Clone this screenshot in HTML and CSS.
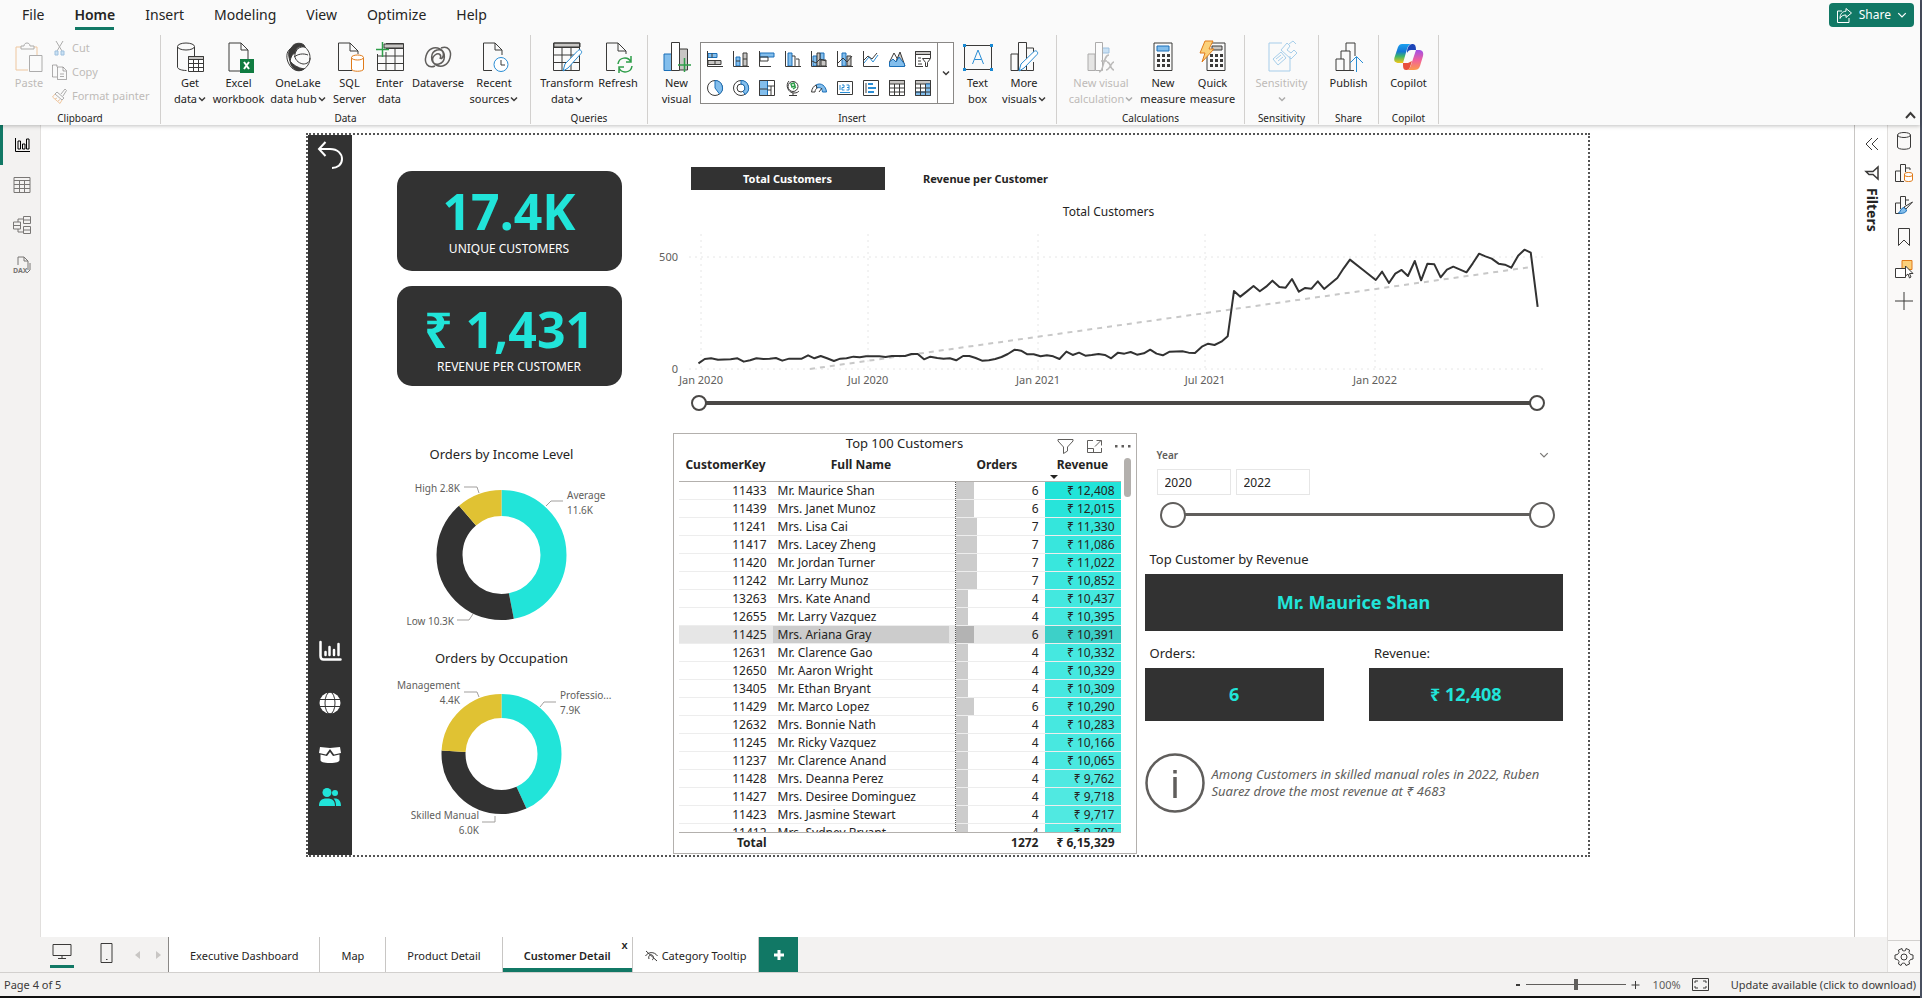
FILE: index.html
```html
<!DOCTYPE html>
<html lang="en">

<head>
    <meta charset="UTF-8">
    <meta name="viewport" content="width=device-width, initial-scale=1.0">
    <title>Customer Detail - Report</title>
    <link rel="stylesheet" href="styles.css">
</head>

<body>
    <svg class="defs" width="0" height="0">
        <defs>
            <symbol id="doc" viewBox="0 0 28 30"><path d="M4 1h12l7 7v21H4zM16 1v7h7" /></symbol>
            <symbol id="chev" viewBox="0 0 8 8"><path d="M1 2.500l3 3 3-3" /></symbol>
            <linearGradient id="cpBlue" x1="0" y1="0" x2="0" y2="1"><stop offset="0" stop-color="#1aa0f0" /><stop offset=".4" stop-color="#1477d4" /><stop offset=".65" stop-color="#3fb568" /><stop offset="1" stop-color="#f5c816" /></linearGradient>
            <linearGradient id="cpPink" x1="0" y1="0" x2="0" y2="1"><stop offset="0" stop-color="#a04fe8" /><stop offset=".5" stop-color="#f0609c" /><stop offset="1" stop-color="#fc9a4a" /></linearGradient>
        </defs>
    </svg>
    <div class="app">
        <header class="ribbon">
            <div class="ribbon-top">
                <nav class="ribbon-tabs">
                    <button>File</button>
                    <button class="active">Home</button>
                    <button>Insert</button>
                    <button>Modeling</button>
                    <button>View</button>
                    <button>Optimize</button>
                    <button>Help</button>
                </nav>
                <button class="share-button">
                    <svg width="17" height="17" viewBox="0 0 17 17"><path d="M6 4H1.500v11.500H13V11M10 1.500l5.500 4.500-5.500 4.500V8C7 8 5 9 4 11.500 4 7 6 4.500 10 4.200z" /></svg>
                    Share
                    <svg width="10" height="10" viewBox="0 0 8 8"><use href="#chev" /></svg>
                </button>
            </div>

            <div class="ribbon-groups">
                <section class="group group-clipboard disabled">
                    <div class="items">
                        <button class="tool">
                            <svg width="28" height="30" viewBox="0 0 28 30"><path class="orange" d="M6 5H1v23h12M19 5h3v8" /><path d="M6 7V4h3c0-4 6-4 6 0h4v3zM14.500 13.500H27V29.500H14.500z" /></svg>
                            <span>Paste</span>
                        </button>
                        <div class="clip-list">
                            <button><svg width="15" height="16" viewBox="0 0 15 16"><path d="M4 1l6 10M11 1L5 11" /><path class="blue" d="M3 11h3v4H3zM9 11h3v4H9z" /></svg>Cut</button>
                            <button><svg width="15" height="16" viewBox="0 0 15 16"><path d="M5 3V1H.500v12H5M5.500 3H11l3.500 3.500V15.500h-9zM11 3v4h3M8 10h4M8 12.500h4" /></svg>Copy</button>
                            <button><svg width="15" height="16" viewBox="0 0 15 16"><path d="M9 6l4-5 1.500 1.500L11 8M5 4l7 6-2 2-7-6z" /><path class="orange" d="M3 6L.500 9 8 15.500l2-3.500M3 11l2-1M6 13l2-1.500" /></svg>Format painter</button>
                        </div>
                    </div>
                    <h2>Clipboard</h2>
                </section>

                <section class="group group-data">
                    <div class="items">
                        <button class="tool">
                            <svg width="28" height="30" viewBox="0 0 28 30"><path d="M1.500 5v20c0 2 4 3.500 9 3.500M18.500 14V5" /><ellipse cx="10" cy="4.500" rx="8.500" ry="3.500" /><path class="white" d="M12.500 14.500h15v15h-15z" /><path class="fillgray" d="M12.500 14.500h15v3h-15z" /><path d="M12.500 21.500h15M12.500 25.500h15M17.500 17.500v12M22.500 17.500v12" /></svg>
                            <span>Get<br>data<svg class="chev"><use href="#chev" /></svg></span>
                        </button>
                        <button class="tool">
                            <svg width="28" height="30" viewBox="0 0 28 30"><use href="#doc" /><path class="excel" d="M15 17h14v14H15z" /><path class="whiteline" d="M19 20l5 7M24 20l-5 7" /></svg>
                            <span>Excel<br>workbook</span>
                        </button>
                        <button class="tool">
                            <svg width="28" height="30" viewBox="0 0 28 30"><path class="dark" d="M8 5C10 0 20 0 21 5c-5-2-9 1-10 6C8 12 7 15 6 19 4 13 4 8 8 5z" /><path d="M6 7C2 10 2 17 5 22c3 6 9 8 13 6 5-2 8-7 8-12 0-4-1-7-5-11-6-1-9 3-10 7-1 5 3 9 8 10 4 0 7-2 7-6" /><path class="dark" d="M6 19c3 4 8 7 14 8-6 4-13 0-14-8z" /><path d="M10 15c4-3 9-4 14-2" /></svg>
                            <span>OneLake<br>data hub<svg class="chev"><use href="#chev" /></svg></span>
                        </button>
                        <button class="tool">
                            <svg width="28" height="30" viewBox="0 0 28 30"><path d="M16 28.500H2.500V1H14l8 8v3M14 1v8h8" /><path class="orange fill-white" d="M15.500 15.500v11.500c0 3 12 3 12 0V15.500" /><ellipse class="orange fill-white" cx="21.500" cy="15.500" rx="6" ry="2.500" /></svg>
                            <span>SQL<br>Server</span>
                        </button>
                        <button class="tool">
                            <svg width="28" height="30" viewBox="0 0 28 30"><path class="fillgray" d="M8 2h19.500v4H8z" /><path d="M10 1.500h17.500v27H1.500V12M10 6.500h17.500M1.500 14h26M1.500 21.500h26M10 10v18.500M19 6.500v22" /><path class="green" d="M0 7.500h13M6.500 0v15" /></svg>
                            <span>Enter<br>data</span>
                        </button>
                        <button class="tool">
                            <svg width="28" height="30" viewBox="0 0 28 30"><path class="ring" d="M11 24C4 27 0 21 2 14S10 4 16 7s6 13-1 15-8-6-4-9 7 0 5 4M17 6c7-3 11 3 9 10S18 26 12 23 6 10 13 8s8 6 4 9" /></svg>
                            <span>Dataverse</span>
                        </button>
                        <button class="tool">
                            <svg width="28" height="30" viewBox="0 0 28 30"><path d="M12 28.500H3.500V1H15l7 7v5M15 1v7h7" /><circle class="blueline fill-white" cx="21" cy="22.500" r="7" /><path d="M21 18v5h4" /></svg>
                            <span>Recent<br>sources<svg class="chev"><use href="#chev" /></svg></span>
                        </button>
                    </div>
                    <h2>Data</h2>
                </section>

                <section class="group group-queries">
                    <div class="items">
                        <button class="tool">
                            <svg width="28" height="30" viewBox="0 0 28 30"><path class="fillgray" d="M1 1h26v4H1z" /><path d="M.500 1h26v27.500H.500zM.500 5.500h26M.500 13h26M.500 20.500h26M9 5.500v23M18 5.500v23" /><path class="blueline fill-white" d="M12 22L25 8.500c2-2 5 1 3 3L15 26l-5 3z" /></svg>
                            <span>Transform<br>data<svg class="chev"><use href="#chev" /></svg></span>
                        </button>
                        <button class="tool">
                            <svg width="28" height="30" viewBox="0 0 28 30"><path d="M11 28.500H2.500V1H14l8 8v3M14 1v8h8" /><path class="green" d="M14 22c1-7 10-8 13-2M27 14v6h-5M28 24c-1 7-10 8-13 2M15 31v-6h5" /></svg>
                            <span>Refresh</span>
                        </button>
                    </div>
                    <h2>Queries</h2>
                </section>

                <section class="group group-insert">
                    <div class="items">
                        <button class="tool">
                            <svg width="28" height="30" viewBox="0 0 28 30"><path class="fillgray" d="M16.500 7h8v21h-8z" /><path class="blue" d="M1 12h8v16.500H1z" /><path class="white" d="M8.500.500h8v28h-8z" /><path class="green" d="M15 23h13M21.500 16v14" /></svg>
                            <span>New<br>visual</span>
                        </button>
                        <div class="gallery">
                            <div class="gallery-grid">
                                <button aria-label="Stacked bar chart"><svg width="16" height="16" viewBox="0 0 16 16"><path class="blue" d="M1 2.500h9v4H1z" /><path class="fillgray" d="M1 9.500h13v4H1z" /><path d="M.500 0v15.500H16M5 2.500v4M8 9.500v4" /></svg></button>
                                <button aria-label="Stacked column chart"><svg width="16" height="16" viewBox="0 0 16 16"><path class="blue" d="M3 6h4v9H3z" /><path class="fillgray" d="M10 2h4v13h-4z" /><path d="M.500 0v15.500H16M3 10h4M10 8h4" /></svg></button>
                                <button aria-label="Clustered bar chart"><svg width="16" height="16" viewBox="0 0 16 16"><path class="blue" d="M1 2h14v4H1z" /><path d="M.500 0v15.500H12M1 6h8v4H1z" /></svg></button>
                                <button aria-label="Clustered column chart"><svg width="16" height="16" viewBox="0 0 16 16"><path class="blue" d="M3 2h4v13H3z" /><path d="M.500 0v15.500H16M7 5h3v10M11 8h3v7" /></svg></button>
                                <button aria-label="Stacked ribbon chart"><svg width="16" height="16" viewBox="0 0 16 16"><path class="blue" d="M2 5h4v10H2zM9 2h4v7H9z" /><path class="fillgray" d="M6 2h3v13H6zM10 9h5v6h-5z" /><path d="M.500 0v15.500H16M1 10l4 2 4-4 6 2" /></svg></button>
                                <button aria-label="Line and column chart"><svg width="16" height="16" viewBox="0 0 16 16"><path class="blue" d="M5 2h4v13H5z" /><path class="fillgray" d="M10 5h4v10h-4z" /><path d="M.500 0v15.500H16M1 12l5-5 4 4 5-6" /></svg></button>
                                <button aria-label="Line chart"><svg width="16" height="16" viewBox="0 0 16 16"><path class="blueline" d="M1 12l5-6 4 5 5-7" /><path d="M.500 0v15.500H16M1 9l4-4 4 3 5-6" /></svg></button>
                                <button aria-label="Area chart"><svg width="16" height="16" viewBox="0 0 16 16"><path class="fillgray" d="M5 15L11 1l5 14z" /><path d="M.500 11L5 2l4 7" /><path class="blue" d="M.500 15.500V11L4 8l3 3 3-5 5.500 7v2.500z" /></svg></button>
                                <button aria-label="Slicer"><svg width="16" height="16" viewBox="0 0 16 16"><path class="fillgray" d="M.500.500h15v3H.500z" /><path d="M8 15.500H.500V.500h15V7M3 7h3M3 10h3M3 13h4M7.500 7.500h8l-3 4v4h-2v-4z" /></svg></button>
                                <button aria-label="Pie chart"><svg width="16" height="16" viewBox="0 0 16 16"><circle cx="8" cy="8" r="7.500" /><path class="blue" d="M8 8V.500A7.500 7.500 0 0 1 12.500 14z" /></svg></button>
                                <button aria-label="Donut chart"><svg width="16" height="16" viewBox="0 0 16 16"><circle cx="8" cy="8" r="7.500" /><circle cx="8" cy="8" r="4" /><path class="blue" d="M8 .500A7.500 7.500 0 0 1 12 14.400l-2-3A4 4 0 0 0 8 4z" /></svg></button>
                                <button aria-label="Treemap"><svg width="16" height="16" viewBox="0 0 16 16"><path class="blue" d="M.500.500h8v15h-8z" /><path d="M.500.500h15v15H.500zM.500 9h8M8.500 6h7M12 6v9.500M8.500 10H12" /></svg></button>
                                <button aria-label="Map"><svg width="16" height="16" viewBox="0 0 16 16"><circle cx="8" cy="6.500" r="5" /><path d="M4 1C0 5 3 13 9 13c3 0 4-1 5-2M8 13v2.500M4 15.500h8" /><path class="green" d="M6 4l3-1 1 3-3 1zM8 9l3-2" /></svg></button>
                                <button aria-label="Gauge"><svg width="16" height="16" viewBox="0 0 16 16"><path class="blue" d="M5 5c5-3 10 1 10.500 7h-4C11 8 9 7 6 8z" /><path d="M.500 12C1 8 3 6 5 5l1 3c-1 1-2 2-2 4zM8 12l3-4" /></svg></button>
                                <button aria-label="Card"><svg width="16" height="16" viewBox="0 0 16 16"><path d="M.500 1.500h15v13H.500z" /><path class="blueline" d="M3 5v5M5 5h2v2.500H5V10h2.500M9.500 5H12v5H9.500M10 7.500h2M3 12.500h10" /></svg></button>
                                <button aria-label="Multi-row card"><svg width="16" height="16" viewBox="0 0 16 16"><path d="M.500.500h15v15H.500zM3 3v10" /><path class="blueline" d="M5 4h5M5 8h8M5 12h6" stroke-width="2" /></svg></button>
                                <button aria-label="Table"><svg width="16" height="16" viewBox="0 0 16 16"><path class="fillgray" d="M.500.500h15v3.500H.500z" /><path d="M.500.500h15v15H.500zM.500 8h15M.500 12h15M5.500 4v11.500M10.500 4v11.500" /></svg></button>
                                <button aria-label="Matrix"><svg width="16" height="16" viewBox="0 0 16 16"><path class="fillgray" d="M.500.500h15v3.500H.500z" /><path class="blue" d="M10.500 4h5v11.500h-5zM.500 12h10v3.500H.500z" /><path d="M.500.500h15v15H.500zM.500 8h15M.500 12h15M5.500 4v11.500M10.500 4v11.500" /></svg></button>
                            </div>
                            <button class="gallery-more" aria-label="More"><svg class="chev"><use href="#chev" /></svg></button>
                        </div>
                        <button class="tool">
                            <svg width="30" height="28" viewBox="0 0 30 28"><path d="M1.500 2.500h27v24h-27z" /><path class="dots" d="M0 1h3v3H0zM27 1h3v3h-3zM0 25h3v3H0zM27 25h3v3h-3z" /><path class="blueline" d="M9.500 21L15 7l5.500 14M11.500 16.500h7" /></svg>
                            <span>Text<br>box</span>
                        </button>
                        <button class="tool">
                            <svg width="28" height="30" viewBox="0 0 28 30"><path d="M1 12h7v16.500H1zM8.500.500h8v28h-8zM16.500 6h7v5M16.500 28.500h7V20" /><path class="blueline fill-white" d="M11 22L24 9.500c2-2 5 1 3 3L14 26l-5 3z" /></svg>
                            <span>More<br>visuals<svg class="chev"><use href="#chev" /></svg></span>
                        </button>
                    </div>
                    <h2>Insert</h2>
                </section>

                <section class="group group-calc">
                    <div class="items">
                        <button class="tool disabled">
                            <svg width="28" height="30" viewBox="0 0 28 30"><path class="fillgray" d="M1 12h7v16.500H1z" /><path class="blue" d="M15 6h7v5h-7z" /><path class="white" d="M8.500.500h7v28h-7z" /><path class="fx" d="M12 30c5 0 4-17 10-17M14 19h6M20 20c4 0 3 8 7 8M27 20c-3 0-4 8-8 8" /></svg>
                            <span>New visual<br>calculation<svg class="chev"><use href="#chev" /></svg></span>
                        </button>
                        <button class="tool">
                            <svg width="20" height="30" viewBox="0 0 20 30"><path d="M1 1h18v27.500H1z" /><path class="blue" d="M4 4h12v5H4z" /><path class="keys" d="M4 13.500h13M4 18.500h13M4 23.500h13" /></svg>
                            <span>New<br>measure</span>
                        </button>
                        <button class="tool">
                            <svg width="30" height="30" viewBox="0 0 30 30"><path d="M9 1h18v27.500H9z" /><path class="fillgray" d="M14 4h10v4H14z" /><path class="keys" d="M12 13.500h13M12 18.500h13M12 23.500h13" /><path class="bolt" d="M7-1h8l-4 8h5L4 20l3-9H2z" /></svg>
                            <span>Quick<br>measure</span>
                        </button>
                    </div>
                    <h2>Calculations</h2>
                </section>

                <section class="group group-sensitivity">
                    <div class="items">
                        <button class="tool disabled">
                            <svg width="28" height="30" viewBox="0 0 28 30"><path class="blueline" d="M14 1H1v28h21V14" /><path class="blueline" d="M5 17l8-7 5 6-8 7zM8 17l5-4M10 19l5-4M13 8l6-7 3 3-3 4 4 3 3-3 3 3-6 6zM21 2l4-3 3 3" /></svg>
                            <span>Sensitivity<br><svg class="chev"><use href="#chev" /></svg></span>
                        </button>
                    </div>
                    <h2>Sensitivity</h2>
                </section>

                <section class="group group-share">
                    <div class="items">
                        <button class="tool">
                            <svg width="28" height="30" viewBox="0 0 28 30"><path d="M1 17h8v11.500H1zM6 17V9h9v19.500H9M11 9V1h9v13M15 28.500h4" /><path class="blueline" d="M21.500 30V15M15 21l6.500-6.500L28 21" /></svg>
                            <span>Publish</span>
                        </button>
                    </div>
                    <h2>Share</h2>
                </section>

                <section class="group group-copilot">
                    <div class="items">
                        <button class="tool">
                            <svg width="30" height="28" viewBox="0 0 30 28"><g stroke="none"><path fill="url(#cpPink)" d="M22 7h3c3 0 5 2 4 6l-3 10c-1 3-3 4-6 4h-8c3 0 4-2 5-5z" /><path fill="#e8503c" d="M9 20h5l4-2-2 6c-1 3-3 3-4 3-3 0-3-3-3-7z" /><path fill="url(#cpBlue)" d="M8 1h10c-3 0-4 2-5 5L9 20H5c-4 0-6-2-4-7L4 4c1-2 2-3 4-3z" /><path fill="#1c45b8" d="M13 1h6c2 0 3 2 3 6h-5c-2 0-3 1-4 3 0-4 1-8 5-9z" /></g></svg>
                            <span>Copilot</span>
                        </button>
                    </div>
                    <h2>Copilot</h2>
                </section>
                <button class="collapse" aria-label="Collapse ribbon"><svg width="11" height="8" viewBox="0 0 11 8"><path d="M1 7l4.500-5L10 7" /></svg></button>
            </div>
        </header>

        <div class="workspace">
            <nav class="view-nav">
                <button class="active" aria-label="Report view"><svg width="16" height="16" viewBox="0 0 16 16"><path d="M1.500 1v13.500H16M4 4h2.500v8H4zM8.500 7H11v5H8.500zM12.500 2H15v10h-2.500z" /></svg></button>
                <button aria-label="Table view"><svg width="18" height="16" viewBox="0 0 18 16"><path d="M1 .500h16v15H1zM1 3.500h16M1 7.500h16M1 11.500h16M6.500 3.500v12M11.500 3.500v12" /></svg></button>
                <button aria-label="Model view"><svg width="18" height="18" viewBox="0 0 18 18"><path d="M.500 6h7v7h-7zM.500 9.500h7M10.500.500h7v7h-7zM10.500 4h7M10.500 10.500h7v7h-7zM10.500 14h7M5 6V3h5.500M5 13v3h5.500" /></svg></button>
                <button aria-label="DAX query view"><svg width="18" height="18" viewBox="0 0 18 18"><path d="M5 9V1h6l4 4v9M11 1v4h4M17 7v7l-3 3" /><text x="0" y="17">DAX</text></svg></button>
            </nav>

            <main class="canvas">
                <div class="report">
                    <nav class="report-nav">
                        <button aria-label="Back"><svg width="28" height="30" viewBox="0 0 28 30"><path d="M9.500 2L3 9l6.500 7M3 9h11c8 0 12 5 12 10 0 6-5 9-10 9" stroke-width="2" /></svg></button>
                        <div class="report-links">
                            <a href="#" aria-label="Dashboard"><svg width="22" height="20" viewBox="0 0 22 20"><path d="M1.500 1v14c0 2 1 3.500 3 3.500h17M6.500 14v-3M10.500 14V6M15 14V9M19.500 14V3" stroke-width="2.500" stroke-linecap="round" /></svg></a>
                            <a href="#" aria-label="Map"><svg width="22" height="22" viewBox="0 0 22 22"><circle class="solid" cx="11" cy="11" r="10.500" /><path class="cut" d="M0 7.500h22M0 14.500h22" /><ellipse class="cut" cx="11" cy="11" rx="5" ry="11" /></svg></a>
                            <a href="#" aria-label="Products"><svg width="22" height="18" viewBox="0 0 22 18"><path class="solid" d="M1 1l10 1 10-1 1 6-7 1.500L11 3 7 8.500 0 7zM1.500 8.500L8 10l3-4 3 4 6.500-1.500V14c0 2-3 3-9.500 3s-9.500-1-9.500-3z" /></svg></a>
                            <a href="#" class="current" aria-label="Customers"><svg width="22" height="18" viewBox="0 0 22 18"><circle class="solid" cx="8" cy="4.500" r="4.500" /><circle class="solid" cx="16" cy="5" r="3" /><path class="solid" d="M0 18c0-5 2-7.500 8-7.500s8 2.500 8 7.500zM17 18c0-4-1-6-2.500-7.500 5-.500 7.500 2 7.500 7.500z" /></svg></a>
                        </div>
                    </nav>

                    <div class="col-left">
                        <div class="kpi">
                            <strong>17.4K</strong>
                            <span>UNIQUE CUSTOMERS</span>
                        </div>
                        <div class="kpi kpi-low">
                            <strong>₹ 1,431</strong>
                            <span>REVENUE PER CUSTOMER</span>
                        </div>

                        <h3>Orders by Income Level</h3>
                        <svg class="donut" viewBox="0 0 300 184">
                            <g transform="rotate(-90 149.500 91)" stroke-width="26">
                                <circle class="teal" cx="149.500" cy="91" r="52" pathLength="247" stroke-dasharray="116 131" />
                                <circle class="black" cx="149.500" cy="91" r="52" pathLength="247" stroke-dasharray="103 144" stroke-dashoffset="-116" />
                                <circle class="yellow" cx="149.500" cy="91" r="52" pathLength="247" stroke-dasharray="28 219" stroke-dashoffset="-219" />
                            </g>
                            <path class="leader" d="M112 23h13l2 6M194 42l5-5h12M105 156h12l4-6" />
                            <text x="108" y="28" class="end">High 2.8K</text>
                            <text x="215" y="35">Average</text>
                            <text x="215" y="50">11.6K</text>
                            <text x="102" y="161" class="end">Low 10.3K</text>
                        </svg>

                        <h3>Orders by Occupation</h3>
                        <svg class="donut" viewBox="0 0 300 186">
                            <g transform="rotate(-90 149.500 86)" stroke-width="24">
                                <circle class="teal" cx="149.500" cy="86" r="48" pathLength="183" stroke-dasharray="79 104" />
                                <circle class="black" cx="149.500" cy="86" r="48" pathLength="183" stroke-dasharray="60 123" stroke-dashoffset="-79" />
                                <circle class="yellow" cx="149.500" cy="86" r="48" pathLength="183" stroke-dasharray="44 139" stroke-dashoffset="-139" />
                            </g>
                            <path class="leader" d="M112 24h13l2 5M188 39l4-5h12M130 154h13v-6" />
                            <text x="108" y="21" class="end">Management</text>
                            <text x="108" y="36" class="end">4.4K</text>
                            <text x="208" y="31">Professio...</text>
                            <text x="208" y="46">7.9K</text>
                            <text x="127" y="151" class="end">Skilled Manual</text>
                            <text x="127" y="166" class="end">6.0K</text>
                        </svg>
                    </div>

                    <div class="col-main">
                        <section class="trend">
                            <div class="switch">
                                <button class="active">Total Customers</button>
                                <button>Revenue per Customer</button>
                            </div>
                            <h3>Total Customers</h3>
                            <svg class="line-chart" viewBox="0 0 890 170">
                                <path class="grid" d="M25 32h856M25 144h856M37 9v135M204 9v135M374 9v135M541 9v135M711 9v135" />
                                <path class="forecast" d="M146 144L867 42" />
                                <polyline transform="translate(-4 -75) scale(.574 .3333)" points="67,640 78,627 89,625 101,629 123,628 135,625 146,635 157,631 168,625 180,627 191,626 202,624 213,632 225,626 247,626 258,616 269,625 280,618 291,625 303,633 314,626 325,625 337,620 348,622 359,619 382,619 393,621 404,618 427,618 438,612 449,612 460,628 471,620 483,624 494,626 505,625 516,631 528,618 539,618 550,624 561,632 573,631 584,627 595,621 606,612 618,599 629,602 640,613 651,613 663,619 674,616 685,619 696,627 708,605 719,615 730,608 741,617 752,615 764,612 775,615 786,625 798,608 809,611 820,606 831,614 843,610 854,599 865,611 876,616 888,605 910,604 921,608 932,609 944,590 955,581 966,585 978,575 989,559 1000,423 1011,440 1022,425 1034,408 1045,424 1056,410 1067,392 1079,411 1090,413 1101,387 1113,425 1124,414 1135,416 1146,394 1157,417 1169,400 1180,384 1191,355 1202,329 1225,360 1236,375 1247,390 1258,365 1270,399 1281,371 1292,360 1303,378 1315,333 1326,391 1337,341 1349,343 1360,382 1371,359 1382,350 1405,367 1416,340 1427,311 1438,319 1449,326 1461,341 1472,344 1483,353 1495,317 1506,299 1517,308 1529,471" />
                                <text x="14" y="36" class="end">500</text>
                                <text x="14" y="148" class="end">0</text>
                                <text x="37" y="159" class="mid">Jan 2020</text>
                                <text x="204" y="159" class="mid">Jul 2020</text>
                                <text x="374" y="159" class="mid">Jan 2021</text>
                                <text x="541" y="159" class="mid">Jul 2021</text>
                                <text x="711" y="159" class="mid">Jan 2022</text>
                            </svg>
                            <div class="range range-small">
                                <input type="range" min="0" max="100" value="0" aria-label="Start date">
                                <input type="range" min="0" max="100" value="100" aria-label="End date">
                            </div>
                        </section>

                        <div class="detail">
                            <section class="table-visual">
                                <h3>Top 100 Customers</h3>
                                <div class="visual-tools">
                                    <button aria-label="Filters"><svg width="17" height="15" viewBox="0 0 17 15"><path d="M1 .500h15v1.500L10.500 8v4l-4 2.500V8L1 2z" /></svg></button>
                                    <button aria-label="Focus mode"><svg width="15" height="13" viewBox="0 0 15 13"><path d="M6 .500H.500v12h14V8M.500 8.500h6v4M8 6.500L14 .500M9.500.500h5v5" /></svg></button>
                                    <button aria-label="More options"><svg width="16" height="4" viewBox="0 0 16 4"><path class="dots-gray" d="M0 1h2.500v2.500H0zM6.500 1H9v2.500H6.500zM13 1h2.500v2.500H13z" /></svg></button>
                                </div>
                                <table>
                                    <thead>
                                        <tr><th>CustomerKey</th><th>Full Name</th><th>Orders</th><th class="sorted">Revenue</th></tr>
                                    </thead>
                                    <tbody>
                                        <tr><td>11433</td><td>Mr. Maurice Shan</td><td><div class="bar"><i style="width: 18px"></i>6</div></td><td style="background-color: #21e4d9">₹ 12,408</td></tr>
                                        <tr><td>11439</td><td>Mrs. Janet Munoz</td><td><div class="bar"><i style="width: 18px"></i>6</div></td><td style="background-color: #27e4da">₹ 12,015</td></tr>
                                        <tr><td>11241</td><td>Mrs. Lisa Cai</td><td><div class="bar"><i style="width: 21px"></i>7</div></td><td style="background-color: #34e6dc">₹ 11,330</td></tr>
                                        <tr><td>11417</td><td>Mrs. Lacey Zheng</td><td><div class="bar"><i style="width: 21px"></i>7</div></td><td style="background-color: #38e6dd">₹ 11,086</td></tr>
                                        <tr><td>11420</td><td>Mr. Jordan Turner</td><td><div class="bar"><i style="width: 21px"></i>7</div></td><td style="background-color: #39e7dd">₹ 11,022</td></tr>
                                        <tr><td>11242</td><td>Mr. Larry Munoz</td><td><div class="bar"><i style="width: 21px"></i>7</div></td><td style="background-color: #3ce7de">₹ 10,852</td></tr>
                                        <tr><td>13263</td><td>Mrs. Kate Anand</td><td><div class="bar"><i style="width: 12px"></i>4</div></td><td style="background-color: #43e8df">₹ 10,437</td></tr>
                                        <tr><td>12655</td><td>Mr. Larry Vazquez</td><td><div class="bar"><i style="width: 12px"></i>4</div></td><td style="background-color: #44e8df">₹ 10,395</td></tr>
                                        <tr class="selected"><td>11425</td><td>Mrs. Ariana Gray</td><td><div class="bar"><i style="width: 18px"></i>6</div></td><td style="background-color: #3dd0c8">₹ 10,391</td></tr>
                                        <tr><td>12631</td><td>Mr. Clarence Gao</td><td><div class="bar"><i style="width: 12px"></i>4</div></td><td style="background-color: #45e8e0">₹ 10,332</td></tr>
                                        <tr><td>12650</td><td>Mr. Aaron Wright</td><td><div class="bar"><i style="width: 12px"></i>4</div></td><td style="background-color: #45e8e0">₹ 10,329</td></tr>
                                        <tr><td>13405</td><td>Mr. Ethan Bryant</td><td><div class="bar"><i style="width: 12px"></i>4</div></td><td style="background-color: #46e8e0">₹ 10,309</td></tr>
                                        <tr><td>11429</td><td>Mr. Marco Lopez</td><td><div class="bar"><i style="width: 18px"></i>6</div></td><td style="background-color: #46e8e0">₹ 10,290</td></tr>
                                        <tr><td>12632</td><td>Mrs. Bonnie Nath</td><td><div class="bar"><i style="width: 12px"></i>4</div></td><td style="background-color: #46e8e0">₹ 10,283</td></tr>
                                        <tr><td>11245</td><td>Mr. Ricky Vazquez</td><td><div class="bar"><i style="width: 12px"></i>4</div></td><td style="background-color: #48e8e0">₹ 10,166</td></tr>
                                        <tr><td>11237</td><td>Mr. Clarence Anand</td><td><div class="bar"><i style="width: 12px"></i>4</div></td><td style="background-color: #49e8e0">₹ 10,065</td></tr>
                                        <tr><td>11428</td><td>Mrs. Deanna Perez</td><td><div class="bar"><i style="width: 12px"></i>4</div></td><td style="background-color: #4fe9e1">₹ 9,762</td></tr>
                                        <tr><td>11427</td><td>Mrs. Desiree Dominguez</td><td><div class="bar"><i style="width: 12px"></i>4</div></td><td style="background-color: #50e9e1">₹ 9,718</td></tr>
                                        <tr><td>11423</td><td>Mrs. Jasmine Stewart</td><td><div class="bar"><i style="width: 12px"></i>4</div></td><td style="background-color: #50e9e1">₹ 9,717</td></tr>
                                        <tr><td>11412</td><td>Mrs. Sydney Bryant</td><td><div class="bar"><i style="width: 12px"></i>4</div></td><td style="background-color: #50e9e1">₹ 9,707</td></tr>
                                    </tbody>
                                    <tfoot>
                                        <tr><td>Total</td><td></td><td>1272</td><td>₹ 6,15,329</td></tr>
                                    </tfoot>
                                </table>
                                <div class="scrollbar"></div>
                            </section>

                            <section class="side">
                                <div class="year">
                                    <div class="year-head">
                                        <h4>Year</h4>
                                        <svg width="10" height="10" viewBox="0 0 8 8"><use href="#chev" /></svg>
                                    </div>
                                    <div class="year-inputs">
                                        <input type="text" value="2020" aria-label="From year">
                                        <input type="text" value="2022" aria-label="To year">
                                    </div>
                                    <div class="range range-big">
                                        <input type="range" min="2020" max="2022" value="2020" aria-label="From">
                                        <input type="range" min="2020" max="2022" value="2022" aria-label="To">
                                    </div>
                                </div>
                                <div class="stat stat-wide">
                                    <h3>Top Customer by Revenue</h3>
                                    <strong>Mr. Maurice Shan</strong>
                                </div>
                                <div class="stats">
                                    <div class="stat">
                                        <h3>Orders:</h3>
                                        <strong>6</strong>
                                    </div>
                                    <div class="stat">
                                        <h3>Revenue:</h3>
                                        <strong>₹ 12,408</strong>
                                    </div>
                                </div>
                                <div class="note">
                                    <svg width="60" height="60" viewBox="0 0 60 60"><circle cx="30" cy="30" r="28.500" stroke-width="2.500" /><path d="M30 24v21M30 17v3.500" stroke-width="3.500" /></svg>
                                    <p>Among Customers in skilled manual roles in 2022, Ruben Suarez drove the most revenue at ₹ 4683</p>
                                </div>
                            </section>
                        </div>
                    </div>
                </div>
            </main>

            <aside class="filters">
                <button aria-label="Expand filters"><svg width="14" height="14" viewBox="0 0 14 14"><path d="M7 1L1 7l6 6M13 1L7 7l6 6" /></svg></button>
                <svg width="14" height="14" viewBox="0 0 14 14"><path d="M13 1v12L8 8.500H4L1 5.500h7z" /></svg>
                <h4>Filters</h4>
            </aside>

            <nav class="pane-nav">
                <button aria-label="Data"><svg width="16" height="18" viewBox="0 0 16 18"><ellipse cx="8" cy="3" rx="6.500" ry="2.500" /><path d="M1.500 3v12c0 3 13 3 13 0V3" /></svg></button>
                <button aria-label="Build visual"><svg width="18" height="18" viewBox="0 0 18 18"><path d="M.500 7h5v10.500h-5zM5.500 17.500V.500h5V8M10.500 4H15v2M5.500 17.500H9" /><path class="orange fill-white" d="M9.500 10v6c0 2 8 2 8 0v-6c0-2-8-2-8 0zM9.500 11c0 2 8 2 8 0" /></svg></button>
                <button aria-label="Format"><svg width="18" height="18" viewBox="0 0 18 18"><path d="M5 17.500H.500V7h5M5.500 13V.500h5V9M10.500 4H14M17.500 6L11 13l-2-2z" /><path class="blue" d="M9 11.500l2.500 2.500c0 3-5 4-8 3 2-1 2-5 5.500-5.500z" /></svg></button>
                <button aria-label="Bookmarks"><svg width="14" height="18" viewBox="0 0 14 18"><path d="M1.500.500h11v17L7 12l-5.500 5.500z" /></svg></button>
                <button aria-label="Selection"><svg width="18" height="18" viewBox="0 0 18 18"><path class="bolt" d="M7 .500h10v9H7z" /><path class="white" d="M.500 8.500h10v9H.500zM10.500 6v10l2.500-2 1.500 4 1.500-1-1.500-3.500H18z" /></svg></button>
                <button aria-label="Add pane"><svg width="18" height="18" viewBox="0 0 18 18"><path d="M0 9h18M9 0v18" /></svg></button>
                <button class="settings" aria-label="Settings"><svg width="20" height="20" viewBox="0 0 20 20"><circle cx="10" cy="10" r="3" /><path d="M8 1.500l.500 2c1 .500 2 .500 3 0l.500-2 3.500 1.500-.500 2.500 1.500 2 2.500.500v4l-2.500.500-1.500 2 .500 2.500-3.500 1.500-1-2c-1-.500-2-.500-3 0l-1 2L4.500 17l.500-2.500-1.500-2L1 12V8l2.500-.500 1.500-2L4.500 3z" /></svg></button>
            </nav>
        </div>

        <div class="pages">
            <button class="device active" aria-label="Desktop layout"><svg width="20" height="15" viewBox="0 0 20 15"><path d="M1 .500h18v11H1zM10 11.500v3M6 14.500h8" /></svg></button>
            <button class="device" aria-label="Mobile layout"><svg width="13" height="20" viewBox="0 0 13 20"><path d="M1 .500h11v19H1zM6 16.500h1.500" /></svg></button>
            <div class="arrows">
                <button aria-label="Previous page"><svg width="6" height="8" viewBox="0 0 6 8"><path d="M5 0v8L0 4z" /></svg></button>
                <button aria-label="Next page"><svg width="6" height="8" viewBox="0 0 6 8"><path d="M1 0v8l5-4z" /></svg></button>
            </div>
            <div class="page-tabs">
                <button>Executive Dashboard</button>
                <button>Map</button>
                <button>Product Detail</button>
                <button class="active">Customer Detail<span class="close">x</span></button>
                <button class="hidden-page"><svg width="13" height="12" viewBox="0 0 13 12"><path d="M1 1l11 10M.500 6C3 2 9 1 12.500 6M4 9c-1-3 1-5 3-4s2 4 0 5" /></svg>Category Tooltip</button>
                <button class="add" aria-label="New page"><svg width="12" height="12" viewBox="0 0 12 12"><path d="M6 1v10M1 6h10" stroke-width="3" /></svg></button>
            </div>
        </div>

        <footer class="status">
            <span>Page 4 of 5</span>
            <div class="zoom">
                <button aria-label="Zoom out"><svg width="6" height="10" viewBox="0 0 6 10"><path d="M1 5h4" stroke-width="2" /></svg></button>
                <input type="range" min="0" max="100" value="50" aria-label="Zoom">
                <button aria-label="Zoom in"><svg width="9" height="10" viewBox="0 0 9 10"><path d="M.500 5h8M4.500 1v8" /></svg></button>
                <span>100%</span>
                <button aria-label="Fit to page"><svg width="17" height="13" viewBox="0 0 17 13"><path d="M.500.500h16v12H.500zM3 5V3h3M11 3h3v2M3 8v2h3M11 10h3V8" /></svg></button>
            </div>
            <a href="#">Update available (click to download)</a>
        </footer>
    </div>
</body>

</html>
```

FILE: styles.css
```css
:root {
    --green: #117865;
    --teal: #21e4d9;
    --dark: #323232;
    --text: #252423;
    --muted: #605e5c;
    --pane: #f3f2f1;
    --line: #d2d0ce;
}

* {
    margin: 0;
    padding: 0;
    box-sizing: border-box;
}

body {
    font-family: "Noto Sans", "Open Sans", sans-serif;
    font-size: 12px;
    line-height: 16px;
    color: var(--text);
    background: #ffffff;
}

button,
input {
    font: inherit;
    color: inherit;
    background: none;
    border: none;
}

a {
    color: inherit;
    text-decoration: none;
}

h2,
h3,
h4 {
    font-weight: 400;
}

h3 {
    font-size: 13px;
    line-height: 20px;
}

svg {
    fill: none;
    stroke: #3b3a39;
    stroke-width: 1;
    overflow: visible;
    flex-shrink: 0;
}

.defs {
    position: absolute;
}

.app {
    min-height: 100vh;
    display: flex;
    flex-direction: column;
    border-right: 2px solid #4a5060;
}

/* icon colours */
.blue {
    fill: #83beec;
    stroke: #1a6fb8;
}

.blueline {
    stroke: #2a8dd4;
}

.orange {
    stroke: #e07b1a;
}

.green {
    stroke: #2f9e4a;
    stroke-width: 1.5;
}

.fillgray {
    fill: #c8c6c4;
}

.white,
.fill-white {
    fill: #ffffff;
}

.dark {
    fill: #3b3a39;
}

.excel {
    fill: #107c41;
    stroke: none;
}

.whiteline {
    stroke: #ffffff;
    stroke-width: 2;
}

.bolt {
    fill: #fbd07a;
    stroke: #e07b1a;
}

.dots {
    fill: #1a8ad4;
    stroke: none;
}

.dots-gray {
    fill: var(--muted);
    stroke: none;
}

.ring,
.fx {
    stroke: #605e5c;
    stroke-width: 1.5;
}

.keys {
    stroke-width: 3;
    stroke-dasharray: 3 2;
}

/* ribbon */
.ribbon {
    position: relative;
    background: #fafafa;
    box-shadow: 0 1px 4px rgba(0, 0, 0, 0.25);
    z-index: 1;
}

.ribbon-top {
    display: flex;
    justify-content: space-between;
    align-items: flex-start;
    height: 35px;
    padding: 0 6px 0 7px;
}

.ribbon-tabs {
    display: flex;
}

.ribbon-tabs button {
    position: relative;
    height: 30px;
    padding: 0 15px;
    font-size: 14px;
}

.ribbon-tabs .active {
    font-weight: 600;
}

.ribbon-tabs .active::after {
    content: "";
    position: absolute;
    left: 16px;
    right: 16px;
    bottom: 0;
    height: 3px;
    background: var(--green);
}

.share-button {
    display: flex;
    align-items: center;
    gap: 6px;
    height: 24px;
    margin-top: 3px;
    padding: 0 7px;
    border-radius: 4px;
    background: var(--green);
    color: #ffffff;
}

.share-button svg {
    stroke: #ffffff;
}

.ribbon-groups {
    display: flex;
    height: 90px;
}

.group {
    display: flex;
    flex-direction: column;
    align-items: center;
    justify-content: space-between;
    height: 89px;
    padding: 7px 7px 0;
    border-right: 1px solid var(--line);
}

.group h2 {
    font-size: 10px;
    line-height: 12px;
}

.items {
    display: grid;
}

.group-clipboard {
    width: 161px;
}

.group-clipboard .items {
    grid-template-columns: 44px 102px;
}

.group-data .items {
    grid-template-columns: 44px 53px 66px 37px 43px 54px 58px;
}

.group-queries .items {
    grid-template-columns: 58px 44px;
}

.group-insert .items {
    grid-template-columns: 43px 258px 43px 50px;
}

.group-calc .items {
    grid-template-columns: 74px 50px 49px;
}

.group-sensitivity .items {
    grid-template-columns: 59px;
}

.group-share .items,
.group-copilot .items {
    grid-template-columns: 45px;
}

.tool {
    display: flex;
    flex-direction: column;
    align-items: center;
    font-size: 11px;
    line-height: 16px;
    white-space: nowrap;
}

.tool > svg {
    height: 30px;
}

.tool span {
    margin: 3px -4px 0;
}

.chev {
    width: 8px;
    height: 8px;
    margin-left: 1px;
    stroke-width: 1.5;
}

.group-clipboard button,
.tool.disabled {
    color: #bebbb8;
}

.group-clipboard svg,
.tool.disabled svg {
    opacity: 0.4;
}

.clip-list {
    display: flex;
    flex-direction: column;
    height: 66px;
    margin-top: -6px;
}

.clip-list button {
    display: flex;
    align-items: center;
    gap: 5px;
    flex: 0 0 24px;
    padding-left: 1px;
    font-size: 11px;
    white-space: nowrap;
}

.gallery {
    display: flex;
    width: 254px;
    height: 62px;
    margin: 0 auto;
    background: #ffffff;
    border: 1px solid #8a8886;
}

.gallery-grid {
    flex: 1;
    display: grid;
    grid-template-columns: repeat(9, 26px);
    padding: 1px;
}

.gallery-grid button {
    display: flex;
    align-items: center;
    justify-content: center;
}

.gallery-more {
    width: 16px;
    border-left: 1px solid #8a8886;
}

.collapse {
    align-self: flex-end;
    margin: 0 4px 2px auto;
}

.collapse svg {
    stroke-width: 2;
}

/* workspace */
.workspace {
    flex: 1;
    display: flex;
}

.view-nav {
    display: flex;
    flex-direction: column;
    width: 41px;
    background: var(--pane);
    border-right: 1px solid #e1dfdd;
}

.view-nav button {
    display: flex;
    align-items: center;
    justify-content: center;
    height: 40px;
    border-left: 3px solid transparent;
}

.view-nav .active {
    border-left-color: var(--green);
}

.view-nav svg {
    stroke: #797775;
}

.view-nav .active svg {
    stroke: #000000;
}

.view-nav text {
    font-size: 7px;
    font-weight: 700;
    fill: #797775;
    stroke: none;
}

.canvas {
    flex: 1;
    display: flex;
    justify-content: center;
    align-items: flex-start;
    padding: 8px 8px 0;
}

.report {
    display: flex;
    width: 100%;
    max-width: 1284px;
    border: 2px dotted #555555;
}

.report-nav {
    display: flex;
    flex-direction: column;
    flex-shrink: 0;
    justify-content: space-between;
    align-items: center;
    width: 44px;
    padding: 5px 0 49px;
    background: var(--dark);
}

.report-nav svg {
    stroke: #ffffff;
}

.report-nav .solid {
    fill: #ffffff;
    stroke: none;
}

.report-nav .cut {
    stroke: var(--dark);
}

.report-nav .current .solid {
    fill: var(--teal);
}

.report-links {
    display: flex;
    flex-direction: column;
    align-items: center;
    gap: 34px;
}

.report-links a {
    display: flex;
    height: 18px;
    align-items: center;
}

.report-links .current {
    margin-top: -10px;
}

.col-left {
    width: 312px;
    flex-shrink: 0;
    padding: 36px 12px 0 0;
}

.kpi {
    display: flex;
    flex-direction: column;
    align-items: center;
    width: 225px;
    height: 100px;
    margin: 0 0 15px 45px;
    padding-top: 11px;
    border-radius: 15px;
    background: var(--dark);
    color: #ffffff;
    font-size: 12px;
}

.kpi-low {
    padding-top: 14px;
}

.kpi strong {
    font-size: 50px;
    line-height: 59px;
    color: var(--teal);
}

.kpi + h3 {
    margin-top: 58px;
}

.col-left h3 {
    text-align: center;
}

.donut {
    display: block;
    width: 100%;
}

.donut text,
.line-chart text {
    font-size: 11px;
    fill: var(--muted);
    stroke: none;
}

.donut text {
    font-size: 10px;
}

.end {
    text-anchor: end;
}

.mid {
    text-anchor: middle;
}

.teal {
    stroke: var(--teal);
}

.black {
    stroke: var(--dark);
}

.yellow {
    stroke: #e0c233;
}

.leader {
    stroke: #a19f9d;
}

.col-main {
    flex: 1;
    min-width: 0;
    padding: 32px 25px 1px 9px;
}

.trend {
    padding-right: 18px;
}

.trend h3 {
    margin-top: 12px;
    font-size: 12px;
    text-align: center;
}

.switch {
    display: flex;
    gap: 4px;
    padding-left: 18px;
}

.switch button {
    width: 194px;
    height: 23px;
    font-size: 11px;
    font-weight: 700;
}

.switch .active {
    background: var(--dark);
    color: #ffffff;
}

.line-chart {
    display: block;
    width: 890px;
    max-width: none;
    margin: 3px 0 0 -9px;
}

.grid {
    stroke: #e6e6e6;
    stroke-dasharray: 2 4;
}

.forecast {
    stroke: #c8c8c8;
    stroke-width: 2;
    stroke-dasharray: 5 5;
}

.line-chart polyline {
    stroke: var(--dark);
    stroke-width: 2;
    stroke-linejoin: round;
    vector-effect: non-scaling-stroke;
}

/* two range inputs share one track */
.range {
    position: relative;
}

.range::before {
    content: "";
    position: absolute;
    left: 8px;
    right: 8px;
    top: calc(50% - 2px);
    height: 4px;
    background: #4a4846;
}

.range input {
    position: absolute;
    left: 0;
    top: 0;
    width: 100%;
    height: 100%;
    appearance: none;
    pointer-events: none;
}

.range input::-webkit-slider-thumb {
    appearance: none;
    width: 16px;
    height: 16px;
    border: 2px solid #4a4846;
    border-radius: 50%;
    background: #ffffff;
    pointer-events: auto;
}

.range-small {
    height: 16px;
    margin-left: 18px;
}

.range-big {
    height: 26px;
    margin: 7px 8px 0 3px;
}

.range-big::before {
    height: 3px;
    background: var(--muted);
}

.range-big input::-webkit-slider-thumb {
    width: 26px;
    height: 26px;
    border-color: var(--muted);
}

.detail {
    display: flex;
    gap: 8px;
    margin-top: 22px;
}

.table-visual {
    position: relative;
    flex-shrink: 0;
    width: 464px;
    padding: 0 5px;
    border: 1px solid #b3b0ad;
}

.table-visual h3 {
    line-height: 18px;
    text-align: center;
}

.visual-tools {
    position: absolute;
    top: 4px;
    right: 5px;
    display: flex;
    align-items: center;
    gap: 13px;
    height: 16px;
}

.visual-tools button {
    display: flex;
}

.visual-tools svg {
    stroke: var(--muted);
}

table,
thead,
tbody,
tfoot {
    display: block;
}

table {
    width: 442px;
    margin-top: 4px;
}

tr {
    display: grid;
    grid-template-columns: 94px 177px 95px 76px;
}

tbody {
    height: 350px;
    overflow: hidden;
}

th {
    position: relative;
    height: 26px;
    padding-top: 1px;
    font-weight: 700;
    border-bottom: 1px solid #b3b0ad;
}

.sorted::after {
    content: "";
    position: absolute;
    left: 5px;
    bottom: 2px;
    border: 4px solid transparent;
    border-top-color: var(--text);
    border-bottom: none;
}

td {
    height: 18px;
    padding: 0 6px;
    line-height: 17px;
    text-align: right;
    border-bottom: 1px solid #ededed;
}

td:nth-child(2) {
    padding-left: 5px;
    text-align: left;
}

td:nth-child(3) {
    padding-left: 5px;
}

.bar {
    display: flex;
    justify-content: space-between;
    height: 17px;
    border-left: 1px dotted #555555;
}

.bar i {
    background: #cccccc;
}

.selected td {
    background: #e6e6e6;
}

.selected td:nth-child(2) {
    background: #cccccc;
    border-right: 1px solid #e6e6e6;
}

.selected .bar i {
    background: #b3b3b3;
}

tfoot td {
    height: 21px;
    line-height: 20px;
    font-weight: 700;
    border-top: 1px solid #b3b0ad;
    border-bottom: none;
}

tfoot td:last-child {
    padding-left: 0;
}

.scrollbar {
    position: absolute;
    top: 24px;
    right: 5px;
    width: 7px;
    height: 39px;
    border-radius: 4px;
    background: #b3b0ad;
}

.side {
    flex: 1;
    min-width: 0;
}

.year {
    padding: 14px 0 0 12px;
}

.year-head {
    display: flex;
    align-items: center;
    justify-content: space-between;
    padding-right: 14px;
}

.year-head h4 {
    font-size: 10px;
    font-weight: 600;
    color: var(--muted);
}

.year-head svg {
    stroke: #797775;
}

.year-inputs {
    display: flex;
    gap: 5px;
    margin-top: 6px;
}

.year-inputs input {
    width: 74px;
    height: 26px;
    padding: 0 7px;
    border: 1px solid #e6e6e6;
}

.stat-wide {
    margin-top: 21px;
}

.stat h3 {
    padding-left: 5px;
}

.stat strong {
    display: block;
    margin-top: 5px;
    font-size: 18px;
    line-height: 53px;
    text-align: center;
    color: var(--teal);
    background: var(--dark);
}

.stat-wide strong {
    line-height: 57px;
}

.stats {
    display: grid;
    grid-template-columns: 180fr 194fr;
    gap: 45px;
    margin-top: 12px;
}

.note {
    display: flex;
    align-items: center;
    gap: 7px;
    margin-top: 32px;
    font-size: 13px;
    line-height: 17px;
    font-style: italic;
    color: var(--muted);
}

.note svg {
    stroke: var(--muted);
}

/* right panes */
.filters {
    display: flex;
    flex-direction: column;
    align-items: center;
    width: 33px;
    padding: 12px 0 0 2px;
    border-left: 1px solid #c8c6c4;
}

.filters svg {
    display: block;
}

.filters > svg {
    margin-top: 15px;
    stroke-width: 1.5;
}

.filters h4 {
    margin-top: 8px;
    font-size: 14px;
    font-weight: 700;
    writing-mode: vertical-rl;
}

.pane-nav {
    display: flex;
    flex-direction: column;
    align-items: center;
    width: 33px;
    margin-bottom: -35px;
    background: #faf9f8;
    border-left: 1px solid #e1dfdd;
}

.pane-nav button {
    display: flex;
    align-items: center;
    justify-content: center;
    width: 32px;
    height: 32px;
}

.pane-nav .settings {
    margin-top: auto;
    border-top: 1px solid var(--line);
}

/* page tabs */
.pages {
    display: flex;
    height: 35px;
    margin-right: 33px;
    padding-left: 40px;
    background: var(--pane);
}

.device {
    position: relative;
    display: flex;
    justify-content: center;
    width: 44px;
    padding-top: 6px;
}

.device.active {
    padding-top: 7px;
}

.device.active::after {
    content: "";
    position: absolute;
    left: 10px;
    right: 10px;
    bottom: 4px;
    height: 3px;
    background: var(--green);
}

.arrows {
    display: flex;
    align-items: center;
    justify-content: space-around;
    width: 40px;
}

.arrows svg {
    fill: #c8c6c4;
    stroke: none;
}

.page-tabs {
    display: flex;
    border-left: 1px solid #8a8886;
}

.page-tabs button {
    position: relative;
    display: flex;
    align-items: center;
    justify-content: center;
    gap: 4px;
    padding: 2px 21px 0;
    background: #ffffff;
    border-right: 1px solid #c8c6c4;
    font-size: 11px;
    white-space: nowrap;
}

.page-tabs .hidden-page {
    padding: 2px 12px 0;
}

.page-tabs .active {
    font-weight: 600;
    box-shadow: inset 0 -4px var(--green);
}

.close {
    position: absolute;
    top: 0;
    right: 4px;
    font-size: 11px;
}

.page-tabs .add {
    width: 39px;
    padding: 0;
    background: var(--green);
    border: none;
}

.add svg {
    stroke: #ffffff;
}

/* status bar */
.status {
    display: flex;
    align-items: center;
    height: 26px;
    padding: 0 4px;
    background: var(--pane);
    border-top: 1px solid var(--line);
    border-bottom: 2px solid #111111;
    color: #3b3a39;
    font-size: 11px;
}

.zoom {
    display: flex;
    align-items: center;
    gap: 5px;
    margin-left: auto;
    color: var(--muted);
}

.zoom span {
    margin-left: 8px;
}

.zoom button:last-child {
    margin: 0 22px 0 6px;
}

.zoom button {
    display: flex;
}

.zoom input {
    width: 100px;
    height: 12px;
    appearance: none;
    background: linear-gradient(#605e5c, #605e5c) center / 100% 1px no-repeat;
}

.zoom input::-webkit-slider-thumb {
    appearance: none;
    width: 4px;
    height: 11px;
    background: var(--muted);
}

.status a {
    white-space: nowrap;
}
```
